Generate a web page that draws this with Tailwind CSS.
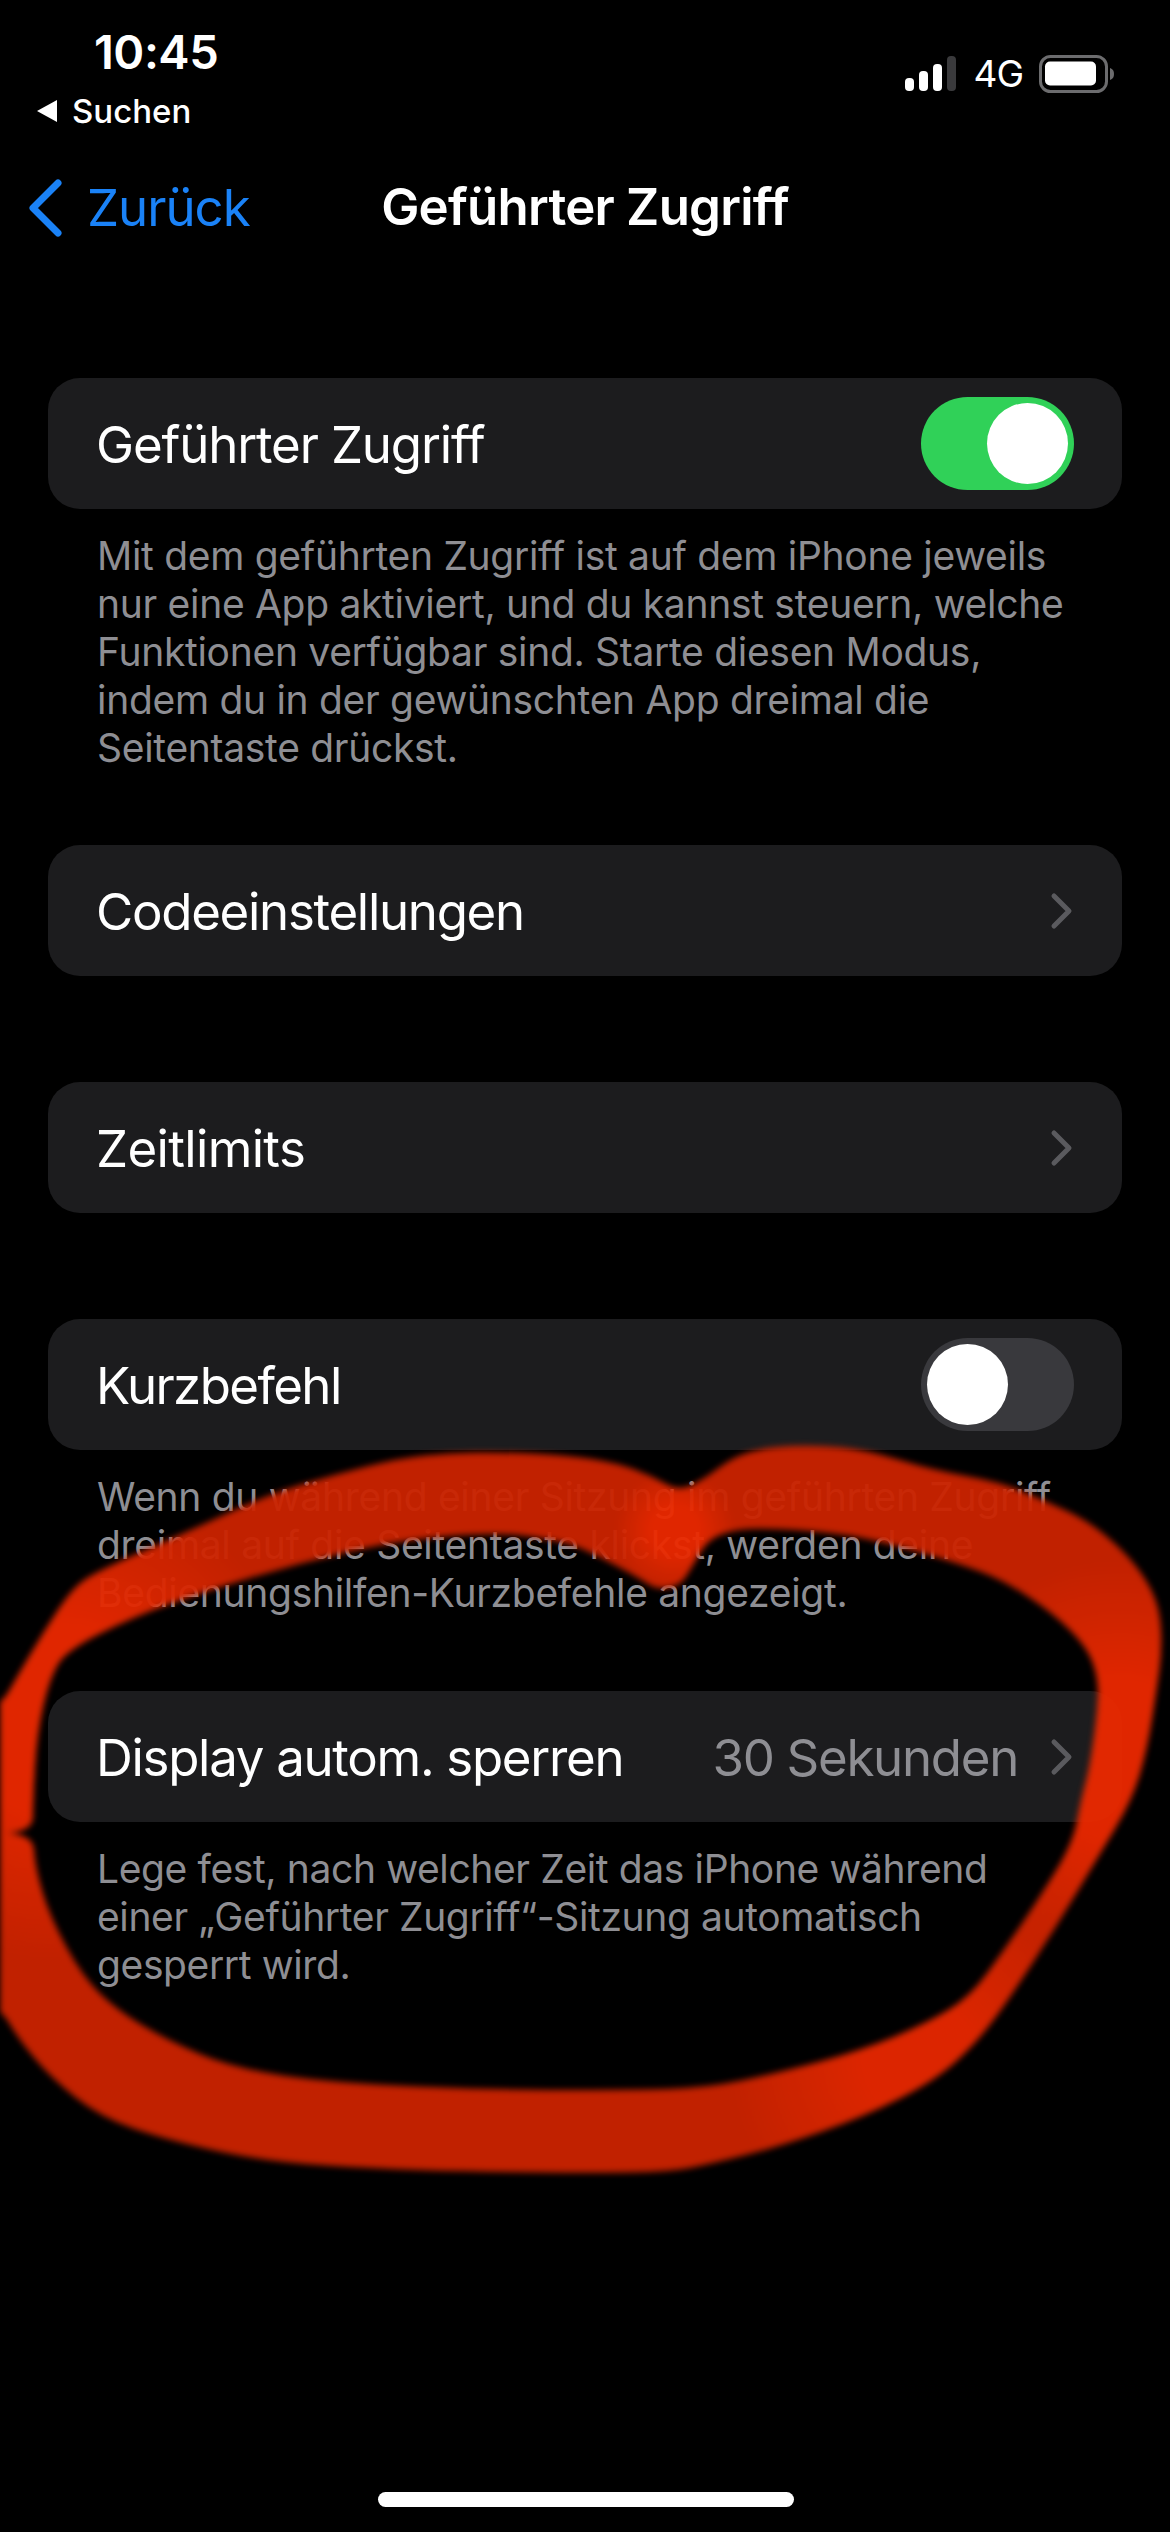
<!DOCTYPE html>
<html lang="de">
<head>
    <meta charset="UTF-8">
    <title>Geführter Zugriff</title>
    <script src="https://cdn.jsdelivr.net/npm/@tailwindcss/browser@4"></script>
</head>
<body class="bg-black">
<div class="relative w-[1170px] h-[2532px] overflow-hidden bg-black text-white font-['Inter','Liberation_Sans',sans-serif]">

    <!-- status bar -->
    <div class="flex justify-between h-[140px]">
        <div class="pl-[36px] pt-[24px]">
            <div class="pl-[58px] text-[47px] leading-[56px] font-semibold tracking-[-0.5px]">10:45</div>
            <div class="flex items-center gap-[14px] mt-[11px]">
                <svg width="22" height="24" viewBox="0 0 22 24"><path d="M21 1v22L1 12z" fill="#fff"/></svg>
                <span class="text-[33px] leading-[40px] font-medium">Suchen</span>
            </div>
        </div>
        <div class="flex items-center gap-[16px] h-[50px] mt-[49px] pr-[55px]">
            <svg width="52" height="36" viewBox="0 0 52 36">
                <rect x="0" y="22" width="9" height="13" rx="4" fill="#fff"/>
                <rect x="14" y="15" width="9" height="20" rx="4" fill="#fff"/>
                <rect x="28" y="8" width="9" height="27" rx="4" fill="#fff"/>
                <rect x="42" y="0" width="9" height="35" rx="4" fill="#3a3a3c"/>
            </svg>
            <span class="text-[37px] leading-[40px] tracking-[-1px]">4G</span>
            <svg width="76" height="38" viewBox="0 0 76 38">
                <rect x="1.5" y="1.5" width="66" height="35" rx="10" fill="none" stroke="#6c6c6e" stroke-width="3"/>
                <rect x="6" y="6" width="51" height="24" rx="5" fill="#fff" transform="translate(0 0.5)"/>
                <path d="M71 13c3 1 4 3 4 6s-1 5-4 6z" fill="#6c6c6e"/>
            </svg>
        </div>
    </div>

    <!-- nav bar -->
    <div class="relative flex items-center justify-center h-[134px]">
        <div class="absolute left-[27px] top-[38px] flex items-center gap-[24px]">
            <svg width="36" height="58" viewBox="0 0 36 58"><path d="M31 4 6 29l25 25" fill="none" stroke="#1a82f7" stroke-width="7" stroke-linecap="round" stroke-linejoin="round"/></svg>
            <span class="text-[51px] leading-[60px] tracking-[-1px] text-[#1a82f7]">Zurück</span>
        </div>
        <div class="text-[51px] leading-[60px] font-semibold tracking-[-0.76px]">Geführter Zugriff</div>
    </div>

    <!-- settings -->
    <div class="px-[48px] pt-[104px]">
        <div class="flex items-center justify-between h-[131px] pl-[48px] pr-[48px] rounded-[32px] bg-[#1c1c1e]">
            <span class="text-[51px] tracking-[-1.15px] pt-[3px]">Geführter Zugriff</span>
            <div class="flex justify-end items-center w-[153px] h-[93px] pr-[6px] rounded-full bg-[#30d158]">
                <div class="w-[81px] h-[81px] rounded-full bg-white"></div>
            </div>
        </div>
        <p class="px-[49px] pt-[23px] text-[39px] leading-[48px] tracking-[-0.3px] whitespace-nowrap text-[#8e8e93]">Mit dem geführten Zugriff ist auf dem iPhone jeweils<br>nur eine App aktiviert, und du kannst steuern, welche<br>Funktionen verfügbar sind. Starte diesen Modus,<br>indem du in der gewünschten App dreimal die<br>Seitentaste drückst.</p>

        <div class="flex items-center justify-between h-[131px] mt-[73px] pl-[48px] pr-[48px] rounded-[32px] bg-[#1c1c1e]">
            <span class="text-[51px] tracking-[-1.3px] pt-[3px]">Codeeinstellungen</span>
            <svg width="24" height="38" viewBox="0 0 24 38"><path d="m4 4 15 15L4 34" fill="none" stroke="#5a5a5e" stroke-width="5" stroke-linecap="round" stroke-linejoin="round"/></svg>
        </div>

        <div class="flex items-center justify-between h-[131px] mt-[106px] pl-[48px] pr-[48px] rounded-[32px] bg-[#1c1c1e]">
            <span class="text-[51px] tracking-[-0.65px] pt-[3px]">Zeitlimits</span>
            <svg width="24" height="38" viewBox="0 0 24 38"><path d="m4 4 15 15L4 34" fill="none" stroke="#5a5a5e" stroke-width="5" stroke-linecap="round" stroke-linejoin="round"/></svg>
        </div>

        <div class="flex items-center justify-between h-[131px] mt-[106px] pl-[48px] pr-[48px] rounded-[32px] bg-[#1c1c1e]">
            <span class="text-[51px] tracking-[-1.6px] pt-[3px]">Kurzbefehl</span>
            <div class="flex items-center w-[153px] h-[93px] pl-[6px] rounded-full bg-[#39393d]">
                <div class="w-[81px] h-[81px] rounded-full bg-white"></div>
            </div>
        </div>
        <p class="px-[49px] pt-[23px] text-[39px] leading-[48px] tracking-[-0.3px] whitespace-nowrap text-[#8e8e93]">Wenn du während einer Sitzung im geführten Zugriff<br>dreimal auf die Seitentaste klickst, werden deine<br>Bedienungshilfen-Kurzbefehle angezeigt.</p>

        <div class="flex items-center justify-between h-[131px] mt-[74px] pl-[48px] pr-[48px] rounded-[32px] bg-[#1c1c1e]">
            <span class="text-[51px] tracking-[-1.3px] pt-[3px]">Display autom. sperren</span>
            <div class="flex items-center gap-[32px]">
                <span class="text-[51px] tracking-[-1.3px] pt-[3px] text-[#8e8e93]">30 Sekunden</span>
                <svg width="24" height="38" viewBox="0 0 24 38"><path d="m4 4 15 15L4 34" fill="none" stroke="#5a5a5e" stroke-width="5" stroke-linecap="round" stroke-linejoin="round"/></svg>
            </div>
        </div>
        <p class="px-[49px] pt-[23px] text-[39px] leading-[48px] tracking-[-0.38px] whitespace-nowrap text-[#8e8e93]">Lege fest, nach welcher Zeit das iPhone während<br>einer „Geführter Zugriff“-Sitzung automatisch<br>gesperrt wird.</p>
    </div>

    <!-- red marker ring drawn over the screenshot -->
    <svg class="absolute left-0 top-0 blur-[3px] opacity-[.95]" width="1170" height="2532" viewBox="0 0 1170 2532">
        <defs>
            <path id="ring" d=""/>
            <radialGradient id="glowLeft" gradientUnits="userSpaceOnUse" cx="60" cy="1720" r="240"><stop offset="0.4" stop-color="#ec2900"/><stop offset="1" stop-color="#ec2900" stop-opacity="0"/></radialGradient>
            <radialGradient id="glowRight" gradientUnits="userSpaceOnUse" cx="1120" cy="1760" r="200"><stop offset="0.4" stop-color="#ec2900"/><stop offset="1" stop-color="#ec2900" stop-opacity="0"/></radialGradient>
            <radialGradient id="glowBottom" gradientUnits="userSpaceOnUse" cx="920" cy="2060" r="190"><stop offset="0.3" stop-color="#e82800"/><stop offset="1" stop-color="#e82800" stop-opacity="0"/></radialGradient>
            <radialGradient id="glowTip" gradientUnits="userSpaceOnUse" cx="675" cy="1530" r="60"><stop offset="0.4" stop-color="#ec2900"/><stop offset="1" stop-color="#ec2900" stop-opacity="0"/></radialGradient>
        </defs>
        <use href="#ring" fill="#cc2300"/>
        <use href="#ring" fill="url(#glowLeft)"/>
        <use href="#ring" fill="url(#glowRight)"/>
        <use href="#ring" fill="url(#glowBottom)"/>
        <use href="#ring" fill="url(#glowTip)"/>
    </svg>

    <!-- home indicator -->
    <div class="absolute left-[378px] top-[2492px] w-[416px] h-[15px] rounded-full bg-white"></div>
</div>

<script>
    // outline of the marker stroke, rounded off through the midpoints
    const points = [
        [-30,1707],[0,1707],[17,1677],[43,1633],[73,1587],[100,1570],[180,1535],[267,1495],[333,1475],[400,1458],[450,1453],[500,1452],
        [567,1455],[617,1463],[650,1475],[680,1492],[707,1477],[733,1457],[767,1447],[817,1445],[867,1450],[933,1470],[1000,1482],
        [1043,1500],[1087,1520],[1123,1550],[1147,1580],[1160,1610],[1162,1650],[1157,1687],[1147,1750],[1132,1800],[1098,1857],
        [1056,1927],[1013,1993],[979,2040],[936,2080],[863,2117],[778,2147],[714,2163],[671,2172],[585,2173],[500,2172],[400,2170],
        [267,2162],[167,2140],[100,2117],[50,2077],[17,2037],[0,2007],[-30,2007],[-30,1833],
        [33,1833],[35,1867],[50,1917],[83,1977],[117,2010],[167,2040],[233,2068],[333,2083],[500,2090],[628,2090],[705,2088],[778,2073],
        [863,2050],[927,2023],[970,1997],[1004,1950],[1038,1900],[1073,1843],[1081,1800],[1090,1767],[1098,1707],[1098,1677],[1087,1647],
        [1053,1613],[1003,1580],[957,1563],[887,1543],[837,1533],[767,1528],[733,1530],[707,1540],[692,1567],[680,1586],[657,1590],[637,1577],
        [600,1557],[567,1542],[500,1532],[400,1540],[300,1563],[200,1593],[133,1617],[67,1650],[50,1677],[37,1733],[33,1800],[33,1833],[-30,1833]
    ];
    const mid = (a, b) => [(a[0] + b[0]) / 2, (a[1] + b[1]) / 2];
    let d = 'M' + mid(points[points.length - 1], points[0]).join(' ');
    points.forEach((p, i) => {
        const next = points[(i + 1) % points.length];
        d += ' Q' + p.join(' ') + ' ' + mid(p, next).join(' ');
    });
    document.getElementById('ring').setAttribute('d', d + 'Z');
</script>
</body>
</html>
